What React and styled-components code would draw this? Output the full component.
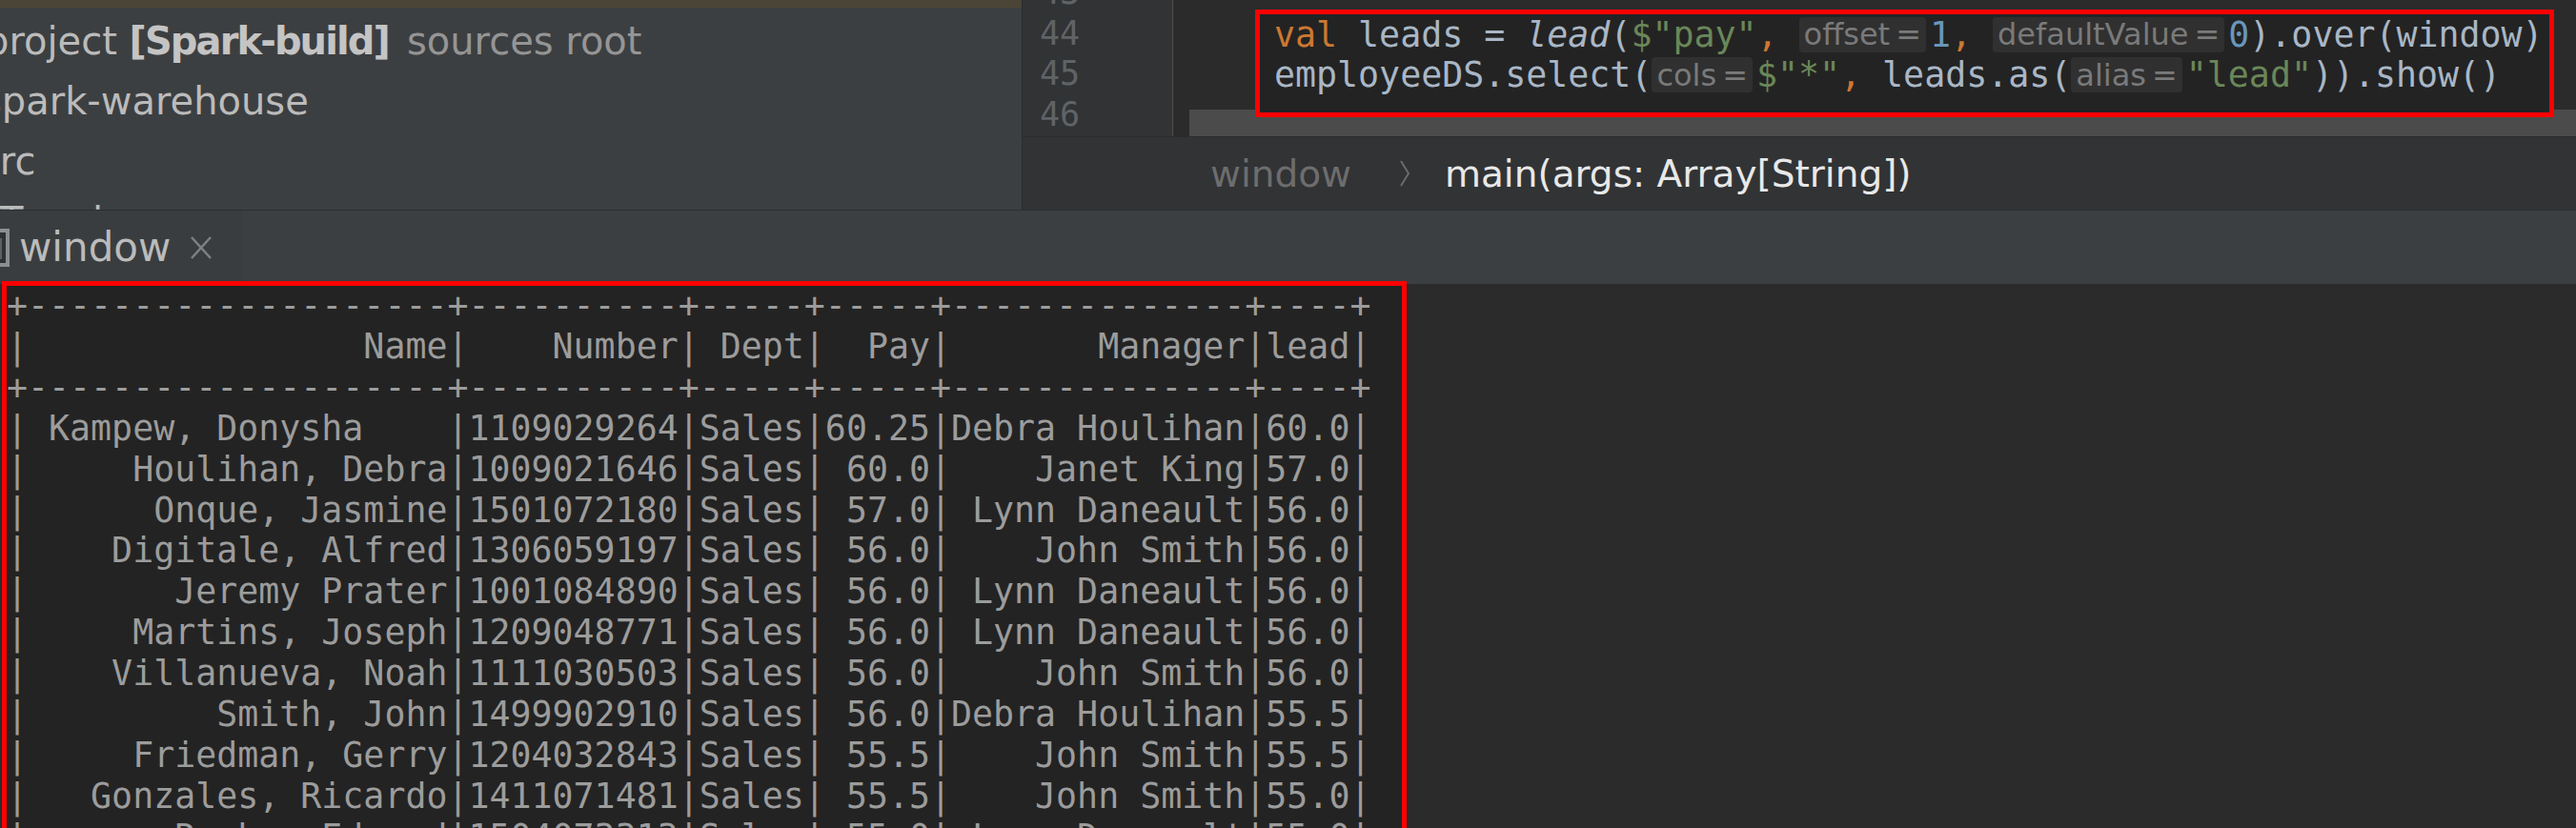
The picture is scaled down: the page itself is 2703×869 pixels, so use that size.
import React from 'react';
import styled, { createGlobalStyle } from 'styled-components';

const GlobalStyle = createGlobalStyle`
  html, body {
    margin: 0;
    padding: 0;
    background: #2b2b2b;
  }
  body {
    width: 2703px;
    height: 869px;
    overflow: hidden;
  }
`;

const MONO = '"DejaVu Sans Mono", "Liberation Mono", monospace';
const UI = '"DejaVu Sans", "Noto Sans", sans-serif';

const widths = [20, 10, 5, 5, 14, 4];
const rows = [
  [' Kampew, Donysha    ', '1109029264', 'Sales', '60.25', 'Debra Houlihan', '60.0'],
  ['Houlihan, Debra', '1009021646', 'Sales', '60.0', 'Janet King', '57.0'],
  ['Onque, Jasmine', '1501072180', 'Sales', '57.0', 'Lynn Daneault', '56.0'],
  ['Digitale, Alfred', '1306059197', 'Sales', '56.0', 'John Smith', '56.0'],
  ['Jeremy Prater', '1001084890', 'Sales', '56.0', 'Lynn Daneault', '56.0'],
  ['Martins, Joseph', '1209048771', 'Sales', '56.0', 'Lynn Daneault', '56.0'],
  ['Villanueva, Noah', '1111030503', 'Sales', '56.0', 'John Smith', '56.0'],
  ['Smith, John', '1499902910', 'Sales', '56.0', 'Debra Houlihan', '55.5'],
  ['Friedman, Gerry', '1204032843', 'Sales', '55.5', 'John Smith', '55.5'],
  ['Gonzales, Ricardo', '1411071481', 'Sales', '55.5', 'John Smith', '55.0'],
  ['Rocha, Edward', '1504073313', 'Sales', '55.0', 'Lynn Daneault', '55.0'],
];

const sep = '+' + widths.map(w => '-'.repeat(w)).join('+') + '+';
const line = cells => '|' + cells.map((c, i) => c.padStart(widths[i])).join('|') + '|';

const consoleText = [
  sep,
  line(['Name', 'Number', 'Dept', 'Pay', 'Manager', 'lead']),
  sep,
  ...rows.map(line),
].join('\n');

const C = {
  kw: '#cc7832',
  id: '#a9b7c6',
  str: '#6a8759',
  num: '#6897bb',
};

function App() {
  return (
    <Screen>
      <GlobalStyle />
      <TopArea>
        <ProjectTree>
          <TreeRow $shift={-16}>
            project <Module>[Spark-build]</Module>
            <Faded>sources root</Faded>
          </TreeRow>
          <TreeRow $shift={-19}>spark-warehouse</TreeRow>
          <TreeRow $shift={-21}>src</TreeRow>
          <TreeRow $shift={0}>Terminus</TreeRow>
        </ProjectTree>

        <EditorColumn>
          <Editor>
            <LineNumbers>
              <Numbers>
                <div>43</div>
                <div>44</div>
                <div>45</div>
                <div>46</div>
              </Numbers>
            </LineNumbers>
            <FoldStrip />
            <CodeArea>
              <CodeFrame>
                <CodeLine>
                  <Tok $c={C.kw}>val</Tok>
                  <Tok $c={C.id}> leads = </Tok>
                  <Tok $c={C.id} $italic>lead</Tok>
                  <Tok $c={C.id}>(</Tok>
                  <Tok $c={C.str}>$"pay"</Tok>
                  <Tok $c={C.kw}>, </Tok>
                  <Hint>offset<span>=</span></Hint>
                  <Tok $c={C.num}>1</Tok>
                  <Tok $c={C.kw}>, </Tok>
                  <Hint>defaultValue<span>=</span></Hint>
                  <Tok $c={C.num}>0</Tok>
                  <Tok $c={C.id}>).over(window)</Tok>
                </CodeLine>
                <CodeLine>
                  <Tok $c={C.id}>employeeDS.select(</Tok>
                  <Hint>cols<span>=</span></Hint>
                  <Tok $c={C.str}>$"*"</Tok>
                  <Tok $c={C.kw}>,</Tok>
                  <Tok $c={C.id}> leads.as(</Tok>
                  <Hint>alias<span>=</span></Hint>
                  <Tok $c={C.str}>"lead"</Tok>
                  <Tok $c={C.id}>)).show()</Tok>
                </CodeLine>
              </CodeFrame>
              <CurrentLine />
            </CodeArea>
          </Editor>

          <Breadcrumbs>
            <Crumb>window</Crumb>
            <Chevron viewBox="0 0 12 30" width="12" height="30">
              <polyline points="2,2 10,15 2,28" fill="none" stroke="#6b6b6b" strokeWidth="2" />
            </Chevron>
            <Crumb $active>main(args: Array[String])</Crumb>
          </Breadcrumbs>
        </EditorColumn>
      </TopArea>

      <ToolTabs>
        <Tab>
          <TabIcon viewBox="0 0 40 40" width="40" height="40">
            <rect x="2" y="2" width="36" height="36" fill="#2f3133" stroke="#8c8f91" strokeWidth="4" />
            <rect x="8" y="10" width="24" height="22" fill="#5d6063" />
          </TabIcon>
          <TabTitle>window</TabTitle>
          <CloseIcon viewBox="0 0 24 26" width="24" height="26">
            <line x1="2" y1="2" x2="22" y2="24" stroke="#7f8183" strokeWidth="2.4" />
            <line x1="22" y1="2" x2="2" y2="24" stroke="#7f8183" strokeWidth="2.4" />
          </CloseIcon>
        </Tab>
      </ToolTabs>

      <ToolContent>
        <ConsoleFrame>
          <ConsoleText>{consoleText}</ConsoleText>
        </ConsoleFrame>
      </ToolContent>
    </Screen>
  );
}

export default App;

const Screen = styled.div`
  width: 2703px;
  height: 869px;
  overflow: hidden;
  display: flex;
  flex-direction: column;
  background: #2b2b2b;
  font-family: ${UI};
`;

const TopArea = styled.div`
  display: flex;
  height: 221px;
  flex-shrink: 0;
  border-bottom: 1px solid #2c2e30;
  box-sizing: border-box;
`;

const ProjectTree = styled.div`
  width: 1072px;
  flex-shrink: 0;
  background: #3c3f41;
  border-top: 8px solid #4b4537;
  padding-top: 3px;
  box-sizing: border-box;
  overflow: hidden;
`;

const TreeRow = styled.div`
  height: 63px;
  display: flex;
  align-items: center;
  white-space: pre;
  font-size: 40px;
  color: #bbbbbb;
  margin-left: ${p => p.$shift}px;
`;

const Module = styled.span`
  font-weight: bold;
  letter-spacing: -1.9px;
  color: #c4c4c4;
`;

const Faded = styled.span`
  margin-left: 19px;
  color: #959595;
`;

const EditorColumn = styled.div`
  flex: 1;
  min-width: 0;
  display: flex;
  flex-direction: column;
  border-left: 1px solid #2b2b2b;
`;

const Editor = styled.div`
  height: 143px;
  flex-shrink: 0;
  display: flex;
  overflow: hidden;
`;

const LineNumbers = styled.div`
  width: 158px;
  flex-shrink: 0;
  background: #313335;
  border-right: 1px solid #4f4f4f;
  padding-left: 18px;
  box-sizing: border-box;
  font-family: ${MONO};
  font-size: 35px;
  line-height: 42.5px;
  color: #606366;
`;

const Numbers = styled.div`
  margin-top: -29px;
`;

const FoldStrip = styled.div`
  width: 17px;
  flex-shrink: 0;
  background: #2b2b2b;
`;

const CodeArea = styled.div`
  flex: 1;
  display: flex;
  flex-direction: column;
  background: #2b2b2b;
`;

const CodeFrame = styled.div`
  position: relative;
  z-index: 1;
  height: 113px;
  margin: 10px 23px -8px 69px;
  padding: 0 0 0 15px;
  border: 5px solid #ff0000;
  box-sizing: border-box;
  background: #232323;
`;

const CodeLine = styled.div`
  display: flex;
  align-items: center;
  height: 42.5px;
  font-family: ${MONO};
  font-size: 36.6px;
  white-space: pre;
`;

const Tok = styled.span`
  color: ${p => p.$c};
  font-style: ${p => (p.$italic ? 'italic' : 'normal')};
`;

const Hint = styled.span`
  display: inline-flex;
  align-items: center;
  gap: 6px;
  height: 37px;
  padding: 0 5px;
  margin-right: 4px;
  border-radius: 4px;
  background: #303030;
  color: #7a7a7a;
  font-family: ${UI};
  font-size: 32px;
`;

const CurrentLine = styled.div`
  height: 28px;
  background: #4b4b4b;
`;

const Breadcrumbs = styled.div`
  flex: 1;
  display: flex;
  align-items: center;
  padding-left: 197px;
  background: #313335;
  border-top: 1px solid #2b2b2b;
  font-size: 39px;
`;

const Crumb = styled.span`
  color: ${p => (p.$active ? '#e8e8e8' : '#6d6d6d')};
`;

const Chevron = styled.svg`
  margin: 0 36px 0 50px;
`;

const ToolTabs = styled.div`
  height: 77px;
  flex-shrink: 0;
  display: flex;
  background: #3c3f41;
`;

const Tab = styled.div`
  width: 254px;
  display: flex;
  align-items: center;
  background: #3a3d3f;
  overflow: hidden;
  font-size: 42px;
  color: #bbbbbb;
`;

const TabIcon = styled.svg`
  flex-shrink: 0;
  margin-left: -30px;
`;

const TabTitle = styled.span`
  margin-left: 10px;
`;

const CloseIcon = styled.svg`
  flex-shrink: 0;
  margin-left: 20px;
`;

const ToolContent = styled.div`
  flex: 1;
  padding-left: 2px;
  background: #2b2b2b;
`;

const ConsoleFrame = styled.div`
  width: 1474px;
  height: 700px;
  margin-top: -3px;
  border: 5px solid #ff0000;
  box-sizing: border-box;
  background: #232323;
`;

const ConsoleText = styled.pre`
  margin: 0;
  font-family: ${MONO};
  font-size: 36.6px;
  line-height: 42.9px;
  color: #9c9c9c;
`;
